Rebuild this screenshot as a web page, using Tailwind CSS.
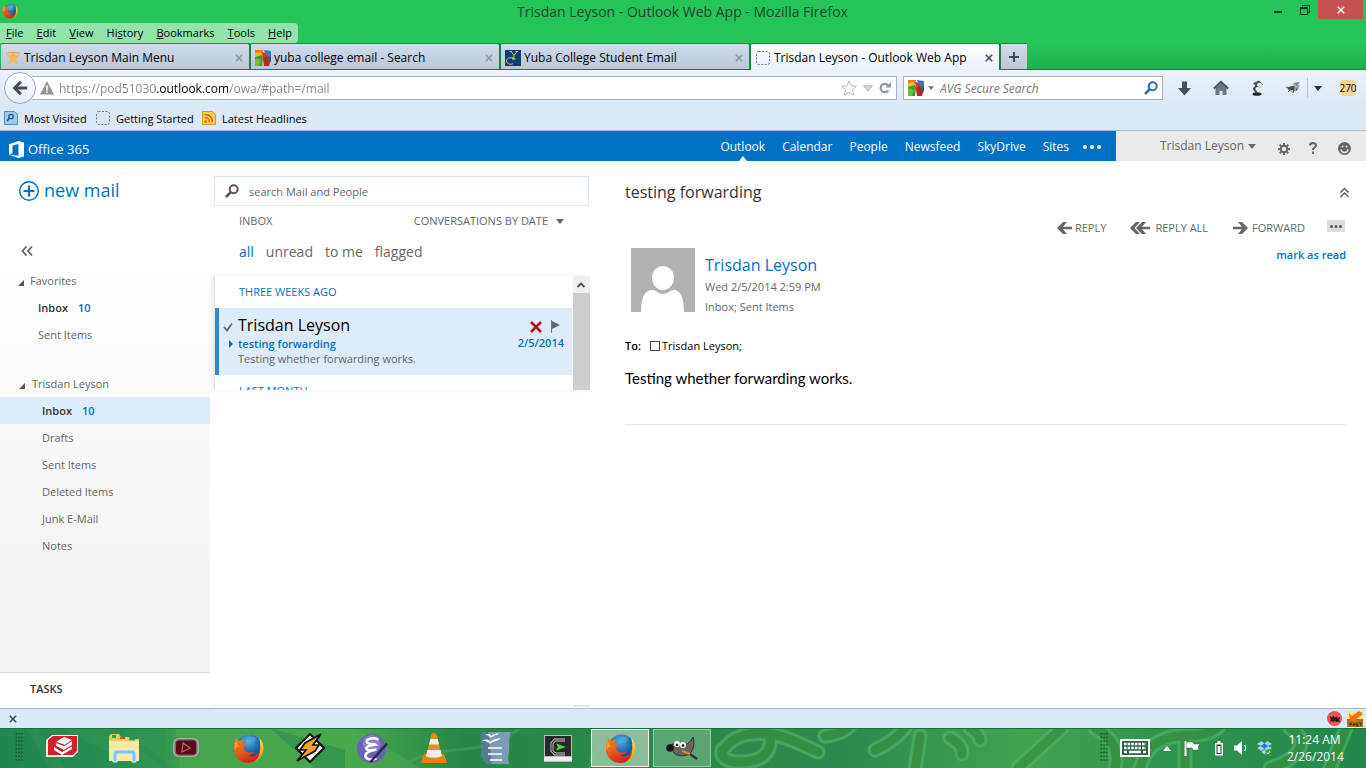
<!DOCTYPE html>
<html lang="en">
<head>
<meta charset="utf-8">
<meta name="viewport" content="width=device-width, initial-scale=1">
<title>Trisdan Leyson - Outlook Web App</title>
<script src="https://cdn.jsdelivr.net/npm/@tailwindcss/browser@4"></script>
</head>
<body class="flex h-screen flex-col overflow-hidden bg-white font-['Open_Sans','Noto_Sans',sans-serif] text-[11px] leading-4 text-black">

<svg class="absolute size-0" aria-hidden="true">
  <defs>
    <radialGradient id="globe" cx=".45" cy=".25" r=".8"><stop offset="0" stop-color="#4fb4e6"/><stop offset=".5" stop-color="#1c6cb4"/><stop offset="1" stop-color="#12306e"/></radialGradient>
    <linearGradient id="fox" x1="0" y1="0" x2=".6" y2="1"><stop offset="0" stop-color="#f08a1e"/><stop offset=".6" stop-color="#e4521b"/><stop offset="1" stop-color="#c3281b"/></linearGradient>
    <linearGradient id="tail" x1="0" y1="0" x2="0" y2="1"><stop offset="0" stop-color="#f9e04c"/><stop offset="1" stop-color="#ee8a1c"/></linearGradient>
  </defs>
  <symbol id="firefox" viewBox="0 0 32 32">
    <circle cx="17" cy="15" r="13.500" fill="url(#globe)"/>
    <path d="M16 5c3-2 7-1 8 1-2 1-1 3-4 4-3 0-5-2-4-5z" fill="#57a3d8" opacity=".7"/>
    <path d="M27 5c4 4 5 9 4 14-2 8-9 12-15 12 6-3 11-7 12-14 .4-4 0-8-1-12z" fill="url(#tail)"/>
    <path d="M3 5l3 3c2-1 4-1 6-1-2 2-2 3-1 4 1 0 3 0 3 1 0 1-2 2-3 3 1 3 3 5 6 5 2 0 3-1 5-1-1 3-4 4-7 4 5 3 11 0 13-6 0 8-5 14-12 14C8 31 1 25 1 17 1 12 2 9 3 5z" fill="url(#fox)"/>
    <path d="M3 6c0 3 1 6 4 8-3 0-5 2-5 4C1 13 2 9 3 6z" fill="#f8a63a" opacity=".8"/>
  </symbol>
  <symbol id="avg" viewBox="0 0 16 16">
    <path d="M0 0h8l-1 4-7 3z" fill="#ee7a1c"/><path d="M0 3l6-1 1 4-7 2z" fill="#f6b826"/><path d="M0 7l7-2 1 3-1 8H0z" fill="#3c9a3c"/><path d="M0 9c3-1 5 0 6 2l-2 5H0z" fill="#6cbb3c"/>
    <path d="M9 0l7 1v7l-5-2z" fill="#2a7fc4"/><path d="M7 2l4 1 2 5-5 1z" fill="#d9301f"/><path d="M8 9l4-3 4 3-2 7H9z" fill="#b8281c"/><path d="M13 6l3 1v5l-2-2z" fill="#1c5ea8"/>
  </symbol>
  <symbol id="dashed" viewBox="0 0 16 16"><rect x="1.500" y="1.500" width="13" height="13" rx="2" fill="none" stroke="#6e7681" stroke-dasharray="2 1.500"/></symbol>
  <symbol id="x" viewBox="0 0 8 8"><path d="M.8.8l6.400 6.400M7.200.8L.8 7.200" stroke="currentColor" stroke-width="1.500"/></symbol>
  <symbol id="lens" viewBox="0 0 14 14"><circle cx="8.700" cy="5.300" r="4" fill="none" stroke="currentColor" stroke-width="2"/><path d="M5.800 8.200L1 13" stroke="currentColor" stroke-width="2.600"/></symbol>
  <symbol id="down" viewBox="0 0 8 5"><path d="M0 0h8L4 5z" fill="currentColor"/></symbol>
  <symbol id="arrowL" viewBox="0 0 16 12"><path d="M7 0h4L7 4.700h9v2.600H7L11 12H7L1 6z" fill="currentColor"/></symbol>
  <symbol id="grip" viewBox="0 0 10 32"><g stroke="#12502f" stroke-width="1.500" stroke-dasharray="1.500 2.500"><path d="M1 0v32M4 0v32M7 0v32"/></g></symbol>
</svg>

<!-- Window title and menus -->
<header class="shrink-0 bg-[#23c558]">
  <div class="flex h-[23px] items-start">
    <svg class="mt-[3px] ml-[2px] size-4"><use href="#firefox"/></svg>
    <h1 class="flex-1 pl-[82px] text-center text-[14px] leading-6 text-[#22432f]">Trisdan Leyson - Outlook Web App - Mozilla Firefox</h1>
    <button aria-label="Minimize" class="flex h-5 w-[26px] items-center justify-center"><svg class="size-3" viewBox="0 0 12 12"><path d="M2 8h8" stroke="#1f2f25" stroke-width="2"/></svg></button>
    <button aria-label="Restore" class="flex h-5 w-[27px] items-center justify-center"><svg class="size-3" viewBox="0 0 12 12" fill="none" stroke="#1f2f25"><path d="M3.500 3V1.500h7v7H9"/><path d="M1.500 4h7v6.500h-7z"/><path d="M1 4h8" stroke-width="2"/></svg></button>
    <button aria-label="Close" class="mr-[3px] flex h-[19px] w-[45px] items-center justify-center bg-[#c75050] text-white"><svg class="size-2"><use href="#x"/></svg></button>
  </div>
  <nav class="flex h-5 w-[298px] items-center justify-between rounded-r bg-[#92e4ab] px-[6px] text-[11px]">
    <button><u>F</u>ile</button><button><u>E</u>dit</button><button><u>V</u>iew</button><button>Hi<u>s</u>tory</button><button><u>B</u>ookmarks</button><button><u>T</u>ools</button><button><u>H</u>elp</button>
  </nav>
  <div class="flex h-[27px] items-end gap-[2px] border-b border-[#1c7b3d] bg-linear-to-b from-[#23c558] to-[#20b04e] pl-px">
    <div class="flex h-[26px] max-w-[248px] flex-1 items-center rounded-t-xs border-t border-[#1c8a43] bg-linear-to-b from-[#cfdcea] to-[#b9c7d7] pt-[2px] pl-1 shadow-[2px_0_0_#1b8340]">
      <svg class="size-4" viewBox="0 0 16 16"><path d="M8 1l2 4h5l-4 4 2 6-5-3-5 3 2-6-4-4h5z" fill="#f3b75a"/><path d="M1 4c3-2 11-2 14 0" stroke="#e9a23c" fill="none"/></svg>
      <span class="ml-[3px] flex-1 truncate text-[12px]">Trisdan Leyson Main Menu</span>
      <button aria-label="Close tab" class="mr-[6px] text-[#8a95a1]"><svg class="size-2"><use href="#x"/></svg></button>
    </div>
    <div class="flex h-[26px] max-w-[248px] flex-1 items-center rounded-t-xs border-t border-[#1c8a43] bg-linear-to-b from-[#cfdcea] to-[#b9c7d7] pt-[2px] pl-1 shadow-[2px_0_0_#1b8340]">
      <svg class="size-4"><use href="#avg"/></svg>
      <span class="ml-[3px] flex-1 truncate text-[12px]">yuba college email - Search</span>
      <button aria-label="Close tab" class="mr-[6px] text-[#8a95a1]"><svg class="size-2"><use href="#x"/></svg></button>
    </div>
    <div class="flex h-[26px] max-w-[248px] flex-1 items-center rounded-t-xs border-t border-[#1c8a43] bg-linear-to-b from-[#cfdcea] to-[#b9c7d7] pt-[2px] pl-1 shadow-[2px_0_0_#1b8340]">
      <svg class="size-4" viewBox="0 0 16 16"><path d="M0 0h16v16H0z" fill="#0c3f78"/><path d="M4.500 1.500h2.500M10.500 1.500h2.500M6 1.500l3 4 3-4M9 5.500V9M7.500 9h3" stroke="#d9c24a" fill="none"/><path d="M8 8.500C5 6.500 1.500 8.500 1.500 11s4 4.500 6.500 2.500M8 7v3" stroke="#d9c24a" fill="none"/></svg>
      <span class="ml-[3px] flex-1 truncate text-[12px]">Yuba College Student Email</span>
      <button aria-label="Close tab" class="mr-[6px] text-[#8a95a1]"><svg class="size-2"><use href="#x"/></svg></button>
    </div>
    <div class="-mb-px flex h-[27px] max-w-[248px] flex-1 items-center rounded-t-xs border-t border-[#1c8a43] bg-linear-to-b from-white to-[#e9f2fb] pt-px pl-1 shadow-[2px_0_0_#1b8340]">
      <svg class="size-4"><use href="#dashed"/></svg>
      <span class="ml-[3px] flex-1 truncate text-[12px]">Trisdan Leyson - Outlook Web App</span>
      <button aria-label="Close tab" class="mr-[6px] text-[#3f4750]"><svg class="size-2"><use href="#x"/></svg></button>
    </div>
    <button aria-label="New tab" class="flex h-[26px] w-[26px] items-center justify-center border-t border-[#1c8a43] bg-linear-to-b from-[#cfdcea] to-[#b9c7d7]"><svg class="size-[10px]" viewBox="0 0 10 10"><path d="M5 0v10M0 5h10" stroke="#3f4852" stroke-width="2"/></svg></button>
  </div>
</header>

<!-- Address bar and bookmarks -->
<div class="flex h-9 shrink-0 items-center bg-linear-to-b from-[#ebf3fb] to-[#dbe8f6] pl-1">
  <button aria-label="Back" class="z-10 flex size-8 items-center justify-center rounded-full border border-[#9aa9ba] bg-linear-to-b from-white to-[#e3edf7]"><svg class="size-4" viewBox="0 0 18 18"><path d="M10 2L3 9l7 7M3.500 9H17" stroke="#414c57" stroke-width="3.400" fill="none"/></svg></button>
  <div class="-ml-1 flex h-6 min-w-0 flex-1 items-center border border-l-0 border-[#a3b3c4] bg-white pl-2">
    <svg class="size-[14px] shrink-0" viewBox="0 0 14 14"><path d="M7 0l7 13.500H0z" fill="#959595"/><path d="M7 4.500v5M7 10.500v1.600" stroke="#fff" stroke-width="1.700"/></svg>
    <input aria-label="Address" class="ml-[5px] min-w-0 flex-1 bg-[linear-gradient(90deg,#858585_96px,#000_96px,#000_169px,#858585_169px)] bg-clip-text pt-px text-[12px] text-transparent outline-none" value="https://pod51030.outlook.com/owa/#path=/mail">
    <button aria-label="Bookmark"><svg class="size-4" viewBox="0 0 16 16"><path d="M8 .8l2.200 4.900 5.200.6-3.900 3.500 1.100 5.300L8 12.400l-4.600 2.700 1.100-5.300L.6 6.300l5.200-.6z" fill="#fff" stroke="#b3b8bd"/></svg></button>
    <button aria-label="History list" class="ml-[6px]"><svg class="h-[7px] w-[10px]" viewBox="0 0 11 7"><path d="M.5.500h10l-5 6z" fill="#d3d8de" stroke="#aab2ba"/></svg></button>
    <button aria-label="Reload" class="mr-[5px] ml-[6px]"><svg class="size-3" viewBox="0 0 12 12"><path d="M9.200 8.500a4.200 4.200 0 1 1 0-5" stroke="#8c99a6" stroke-width="2.200" fill="none"/><path d="M12 0v5.500H6.500z" fill="#8c99a6"/></svg></button>
  </div>
  <div class="ml-[6px] flex h-6 w-[260px] items-center border border-[#a3b3c4] bg-white pl-1">
    <svg class="size-4 shrink-0"><use href="#avg"/></svg>
    <svg class="ml-[4px] h-1 w-[6px] shrink-0 text-[#777]"><use href="#down"/></svg>
    <input aria-label="Search" placeholder="AVG Secure Search" class="ml-[6px] min-w-0 flex-1 pt-px text-[12px] italic outline-none placeholder:text-[#777]">
    <button aria-label="Go" class="mr-1 text-[#2c6db3]"><svg class="size-[14px]"><use href="#lens"/></svg></button>
  </div>
  <button aria-label="Downloads" class="ml-[14px]"><svg class="size-[15px]" viewBox="0 0 15 15"><path d="M5 .5h5V7h4l-6.500 7.500L1 7h4z" fill="#444f5a"/></svg></button>
  <button aria-label="Home" class="ml-[21px]"><svg class="size-4" viewBox="0 0 16 16"><path d="M8 3l5.500 5v7h-4v-4h-3v4h-4V8z" fill="#6b7680"/><path d="M.8 8.500L8 1.800l7.200 6.700" stroke="#44505c" stroke-width="1.800" fill="none"/></svg></button>
  <button aria-label="Lamp" class="ml-5"><svg class="size-4" viewBox="0 0 16 16"><ellipse cx="8" cy="14" rx="4.500" ry="1.800" fill="#222"/><path d="M8 13L5 9l3-4" stroke="#444" stroke-width="2" fill="none"/><path d="M4 3l6-2.500 4 4-3 3-4-1z" fill="#555"/><ellipse cx="10.500" cy="5" rx="2.600" ry="2" fill="#f1f1f1"/></svg></button>
  <button aria-label="Fly" class="ml-5"><svg class="size-4" viewBox="0 0 16 16"><path d="M3 9l6-5 6 1-2 5-7 2z" fill="#a7abad"/><path d="M1 7l4 1M3 12l3-3M8 13l1-4M11 11l1-3" stroke="#555"/><ellipse cx="7" cy="8" rx="2.800" ry="2" fill="#4d4f50"/><path d="M8 3l7-1-3 4z" fill="#7e8284"/><circle cx="4" cy="8.500" r="1.300" fill="#6d3b35"/></svg></button>
  <span class="mx-[6px] h-5 w-px bg-[#b8c4d1]"></span>
  <button aria-label="More add-ons"><svg class="h-[5px] w-2 text-[#26323e]"><use href="#down"/></svg></button>
  <button class="mr-[10px] ml-[18px] flex h-4 w-4 items-center justify-center rounded-sm bg-[#fbd391] text-[10px]">270</button>
</div>
<nav class="flex h-6 shrink-0 items-center bg-[#dbe8f6] pl-1 text-[11px]" aria-label="Bookmarks">
  <svg class="size-[14px]" viewBox="0 0 14 14"><path d="M.5.500h10l3 3v10H.5z" fill="#9ccbe8" stroke="#4d93c0"/><circle cx="7" cy="5.500" r="2.200" fill="none" stroke="#1d567f" stroke-width="1.300"/><path d="M5.500 7L3 10" stroke="#1d567f" stroke-width="1.500"/></svg>
  <a href="#" class="ml-[6px] w-[66px] pt-px whitespace-nowrap">Most Visited</a>
  <svg class="ml-[5px] size-4"><use href="#dashed"/></svg>
  <a href="#" class="ml-[5px] w-[80px] pt-px whitespace-nowrap">Getting Started</a>
  <svg class="ml-[6px] size-[14px]" viewBox="0 0 14 14"><path d="M.5.500h10l3 3v10H.5z" fill="#f9cf55" stroke="#d89c20"/><circle cx="3.500" cy="10.500" r="1.200" fill="#d76c12"/><path d="M2.500 6.500c3 0 5 2 5 5M2.500 3.500c5 0 8 3 8 8" stroke="#d76c12" stroke-width="1.400" fill="none"/></svg>
  <a href="#" class="ml-[6px] pt-px">Latest Headlines</a>
</nav>

<!-- Office 365 bar -->
<div class="flex h-[31px] shrink-0 border-t border-[#a9b9cb] bg-[#0072c6] text-white">
  <a href="#" class="flex flex-1 items-center pt-[6px] pl-[9px]">
    <svg class="h-[17px] w-[15px]" viewBox="0 0 15 17"><path fill-rule="evenodd" d="M0 3.200L9.500 0 15 1.500v14L9.500 17 0 13.700l9.500 1V3L3.500 4.500v7.700L0 13.700z" fill="#fff"/></svg>
    <span class="ml-1 text-[13px]">Office 365</span>
  </a>
  <nav class="flex items-center gap-[17px] text-[12px]">
    <a href="#" class="relative flex h-full items-center pt-[2px]">Outlook<svg class="absolute bottom-0 left-1/2 h-[5px] w-2 -translate-x-1/2 rotate-180"><use href="#down"/></svg></a>
    <a href="#" class="pt-[2px]">Calendar</a><a href="#" class="pt-[2px]">People</a><a href="#" class="pt-[2px]">Newsfeed</a><a href="#" class="pt-[2px]">SkyDrive</a><a href="#" class="pt-[2px]">Sites</a>
    <button aria-label="More apps" class="mr-[15px] -ml-[3px] pt-[2px]"><svg class="h-1 w-[18px]" viewBox="0 0 18 4" fill="#fff"><circle cx="2" cy="2" r="2"/><circle cx="9" cy="2" r="2"/><circle cx="16" cy="2" r="2"/></svg></button>
  </nav>
  <div class="flex w-[250px] items-center justify-end bg-[#e9eaeb] text-[#666]">
    <button class="flex items-center gap-1 text-[12px]">Trisdan Leyson <svg class="h-[5px] w-2"><use href="#down"/></svg></button>
    <button aria-label="Settings" class="mt-[5px] ml-[22px]"><svg class="size-3" viewBox="0 0 12 12"><circle cx="6" cy="6" r="3.200" fill="none" stroke="#666" stroke-width="2"/><path d="M6 0v2M6 10v2M0 6h2M10 6h2M1.800 1.800l1.400 1.400M8.800 8.800l1.400 1.400M10.200 1.800L8.800 3.200M3.200 8.800l-1.400 1.400" stroke="#666" stroke-width="2"/></svg></button>
    <button aria-label="Help" class="mt-[4px] ml-[19px]"><svg class="h-3 w-2" viewBox="0 0 8 12"><path d="M1 3.500C1 .5 7 .300 7 3.300c0 2.200-3 2.200-3 4.700M4 9.500V12" stroke="#666" stroke-width="2.100" fill="none"/></svg></button>
    <button aria-label="Feedback" class="mt-[5px] mr-[15px] ml-[21px]"><svg class="size-[13px]" viewBox="0 0 13 13"><circle cx="6.500" cy="6.500" r="6.500" fill="#666"/><path d="M3 7.500c.5 4 6.500 4 7 0" stroke="#e9eaeb" stroke-width="1.400" fill="none"/><circle cx="4.500" cy="4.500" r="1" fill="#e9eaeb"/><circle cx="8.500" cy="4.500" r="1" fill="#e9eaeb"/></svg></button>
  </div>
</div>

<main class="flex min-h-0 flex-1 text-[#666]">
  <!-- Folder pane -->
  <aside class="flex w-[210px] shrink-0 flex-col">
    <div class="flex h-[60px] items-center pl-[18px]">
      <button class="flex items-center gap-1 text-[18px] leading-6 text-[#0072c6]"><svg class="size-[22px]" viewBox="0 0 22 22"><circle cx="11" cy="11" r="9.300" fill="none" stroke="#0072c6" stroke-width="1.500"/><path d="M11 5.500v11M5.500 11h11" stroke="#0072c6" stroke-width="2.200"/></svg><span class="pb-[2px]">new mail</span></button>
    </div>
    <button aria-label="Collapse folders" class="mt-6 ml-[21px] flex h-3 w-3 items-center"><svg class="h-[10px] w-3" viewBox="0 0 12 10"><path d="M5.500.5L1.500 5l4 4.500M11 .5L7 5l4 4.500" stroke="#666" stroke-width="1.800" fill="none"/></svg></button>
    <nav class="mt-[10px] flex flex-1 flex-col bg-linear-to-b from-white to-[#f3f3f3] to-80%" aria-label="Folders">
      <button class="flex h-[27px] items-center gap-[6px] pl-[18px]"><svg class="mt-1 size-[6px]" viewBox="0 0 6 6"><path d="M6 0v6H0z" fill="#555"/></svg>Favorites</button>
      <a href="#" class="flex h-[27px] items-center gap-[10px] pl-[38px] font-semibold text-[#333]">Inbox <b class="font-semibold text-[#0072c6]">10</b></a>
      <a href="#" class="flex h-[27px] items-center pl-[38px]">Sent Items</a>
      <button class="mt-[22px] flex h-[27px] items-center gap-[7px] pl-[19px]"><svg class="mt-1 size-[6px]" viewBox="0 0 6 6"><path d="M6 0v6H0z" fill="#555"/></svg>Trisdan Leyson</button>
      <a href="#" class="flex h-[27px] items-center gap-[10px] bg-[#deebf8] pl-[42px] font-semibold text-[#333]">Inbox <b class="font-semibold text-[#0072c6]">10</b></a>
      <a href="#" class="flex h-[27px] items-center pl-[42px]">Drafts</a>
      <a href="#" class="flex h-[27px] items-center pl-[42px]">Sent Items</a>
      <a href="#" class="flex h-[27px] items-center pl-[42px]">Deleted Items</a>
      <a href="#" class="flex h-[27px] items-center pl-[42px]">Junk E-Mail</a>
      <a href="#" class="flex h-[27px] items-center pl-[42px]">Notes</a>
    </nav>
    <a href="#" class="flex h-9 items-center border-t border-[#d5d5d5] bg-white pb-[3px] pl-[30px] font-semibold text-[#333]">TASKS</a>
  </aside>

  <!-- Message list -->
  <section class="ml-1 flex w-[376px] shrink-0 flex-col pt-[15px]">
    <label class="mr-px flex h-[30px] items-center border border-[#d5e5f5] pl-[10px]"><svg class="size-[14px] text-[#555]"><use href="#lens"/></svg><input type="search" placeholder="search Mail and People" class="ml-[10px] flex-1 pt-px outline-none placeholder:text-[#666]"></label>
    <div class="flex h-[30px] items-center justify-between pr-[26px] pl-[25px]"><h2>INBOX</h2><button class="flex items-center gap-2">CONVERSATIONS BY DATE <svg class="h-[5px] w-2"><use href="#down"/></svg></button></div>
    <div class="flex h-8 items-center gap-3 pl-[25px] text-[14px] leading-5"><button class="text-[#0072c6]">all</button><button>unread</button><button>to me</button><button>flagged</button></div>
    <div class="mt-2 flex h-[114px] overflow-hidden border-l border-[#e3e3e3] shadow-[-3px_0_4px_#eeeeee]">
      <div class="min-w-0 flex-1">
        <h3 class="flex h-8 items-center pl-6 text-[#0072c6]">THREE WEEKS AGO</h3>
        <article class="mr-px flex h-[67px] border-l-4 border-[#2a8dd4] bg-[#deebf8]">
          <div class="flex w-[19px] flex-col items-end gap-2 pt-[14px] pr-[5px]">
            <svg class="size-[10px]" viewBox="0 0 10 10"><path d="M1 5l3 3.500L9 1.500" stroke="#666" stroke-width="1.800" fill="none"/></svg>
            <svg class="h-2 w-1" viewBox="0 0 4 8"><path d="M0 0l4 4-4 4z" fill="#0072c6"/></svg>
          </div>
          <div class="flex-1 pt-[6px]">
            <p class="text-[16px] leading-[22px] text-black">Trisdan Leyson</p>
            <p class="leading-[15px] font-semibold text-[#0072c6]">testing forwarding</p>
            <p class="leading-[15px]">Testing whether forwarding works.</p>
          </div>
          <div class="flex flex-col items-end pt-3 pr-2">
            <div class="flex items-center gap-[9px] pr-[4px]">
              <button aria-label="Delete"><svg class="size-3" viewBox="0 0 12 12"><path d="M1 1l10 10M11 1L1 11" stroke="#b5121b" stroke-width="2.600"/></svg></button>
              <button aria-label="Flag"><svg class="h-[13px] w-[9px]" viewBox="0 0 9 13"><path d="M.5 0v13" stroke="#777"/><path d="M1 1l8 4-8 4z" fill="#666"/></svg></button>
            </div>
            <time class="mt-[2px] leading-[15px] font-semibold text-[#0072c6]">2/5/2014</time>
          </div>
        </article>
        <h3 class="pt-2 pl-6 text-[#0072c6]">LAST MONTH</h3>
      </div>
      <div class="w-[17px] bg-[#cdcdcd]"><button aria-label="Scroll up" class="flex h-[17px] w-full items-center justify-center bg-[#f0f0f0] pr-[2px]"><svg class="h-[6px] w-2" viewBox="0 0 8 6"><path d="M.5 5L4 1.500 7.500 5" stroke="#505050" stroke-width="1.800" fill="none"/></svg></button></div>
    </div>
    <div class="mt-auto mb-[1px] flex justify-between"><span class="h-px w-[356px] bg-[#ececec]"></span><span class="h-[2px] w-[17px] bg-[#e6e6e6]"></span></div>
  </section>

  <!-- Reading pane -->
  <section class="min-w-0 flex-1 pt-[19px] pr-5 pl-[35px]">
    <div class="flex items-center justify-between"><h2 class="text-[16px] leading-6 text-[#333]">testing forwarding</h2><button aria-label="Collapse header" class="-mr-[3px]"><svg class="h-[11px] w-[9px]" viewBox="0 0 9 11"><path d="M.5 5.500l4-4 4 4M.5 10l4-4 4 4" stroke="#555" stroke-width="1.400" fill="none"/></svg></button></div>
    <div class="mt-[15px] flex h-[18px] items-center justify-end text-[11px]">
      <button class="flex items-center gap-[3px]"><svg class="h-3 w-4"><use href="#arrowL"/></svg>REPLY</button>
      <button class="ml-6 flex items-center gap-[5px]"><svg class="h-3 w-5" viewBox="0 0 20 12" fill="#666"><path d="M6 0h4L4.500 6l5.500 6H6L0 6zM12 0h4l-4 4.700h8v2.600h-8l4 4.700h-4L6 6z"/></svg>REPLY ALL</button>
      <button class="ml-[25px] flex items-center gap-[3px]"><svg class="h-3 w-4 rotate-180"><use href="#arrowL"/></svg>FORWARD</button>
      <button aria-label="More actions" class="mb-1 ml-[22px] mr-px flex h-3 w-[18px] items-center justify-center bg-[#dcdcdc]"><svg class="h-[3px] w-3" viewBox="0 0 12 3" fill="#555"><circle cx="1.500" cy="1.500" r="1.500"/><circle cx="6" cy="1.500" r="1.500"/><circle cx="10.500" cy="1.500" r="1.500"/></svg></button>
    </div>
    <div class="mt-[10px] flex pl-[6px]">
      <svg class="mt-px size-16 shrink-0" viewBox="0 0 64 64"><path d="M0 0h64v64H0z" fill="#b1b1b1"/><ellipse cx="32" cy="30" rx="11" ry="12" fill="#fff"/><path d="M10 64c0-14 3-22 12-22 3 0 5 4 10 4s7-4 10-4c8 0 11 8 11 22z" fill="#fff"/></svg>
      <div class="ml-[10px] flex-1 pt-[7px]">
        <a href="#" class="block text-[16px] leading-[22px] text-[#0072c6]">Trisdan Leyson</a>
        <p class="pt-px leading-5">Wed 2/5/2014 2:59 PM</p>
        <p class="leading-5">Inbox; Sent Items</p>
      </div>
      <button class="h-4 font-semibold text-[#0072c6]">mark as read</button>
    </div>
    <div class="mt-[21px] flex items-center text-black"><span class="w-[25px] font-semibold">To:</span><label class="flex items-center gap-[2px]"><input type="checkbox" class="size-[10px] appearance-none border border-[#444] bg-white">Trisdan Leyson;</label></div>
    <p class="mt-[13px] border-b border-[#e6e6e6] pb-[35px] font-['Lato',sans-serif] text-[15px] leading-[22px] text-black">Testing whether forwarding works.</p>
  </section>
</main>

<!-- Add-on bar -->
<div class="flex h-5 shrink-0 items-center border-t border-[#a9b9cb] bg-[#dbe8f6] pl-[9px]">
  <button aria-label="Close add-on bar" class="text-[#3b4550]"><svg class="size-2"><use href="#x"/></svg></button>
  <svg class="ml-auto size-[15px]" viewBox="0 0 16 16"><circle cx="8" cy="8" r="8" fill="#ea5455"/><path d="M3 5l2.500 2L7 4.500 8 7l3-1.500V8l3-2-1 3.500 1 2.500-2.500-1L10 12l-1.500-1.500L6 12l-.5-1.500L3 12l1-3z" fill="#301818"/></svg>
  <svg class="mr-[3px] ml-[5px] size-4" viewBox="0 0 16 16"><path d="M0 0h16v16H0z" fill="#f6ea8c"/><path d="M0 8h16v8H0z" fill="#a9760f"/><path d="M2 2l3 3 7-5 4 3-7 5 2 3-8-1z" fill="#fb6d0a"/><path d="M3 15v-3h2M3 13.500h2M6 15l1-3 1 3M11 12H9v1.500h2V15H9M12 12h3M13.500 12v3" stroke="#3d2505" stroke-width=".8" fill="none"/></svg>
</div>

<!-- Taskbar -->
<footer class="relative flex h-10 shrink-0 items-center overflow-hidden bg-[#278a4b] text-white">
  <svg class="absolute inset-0 h-full w-full" viewBox="0 0 1366 40" preserveAspectRatio="none" fill="none">
    <defs><linearGradient id="bar"><stop offset="0" stop-color="#1f8650"/><stop offset=".12" stop-color="#2b9350"/><stop offset=".13" stop-color="#3b9d4c"/><stop offset=".26" stop-color="#44a44b"/><stop offset=".34" stop-color="#268749"/><stop offset=".56" stop-color="#2f8a4a"/><stop offset=".62" stop-color="#2a8b4d"/><stop offset=".75" stop-color="#41a450"/><stop offset=".85" stop-color="#2f944c"/><stop offset="1" stop-color="#22884b"/></linearGradient></defs>
    <path d="M0 0h1366v40H0z" fill="url(#bar)"/>
    <path d="M25 0h12l28 40H50zM60 0h45l60 40h-25zM120 0h55v40z" fill="#45a157" opacity=".22"/>
    <path d="M175 0h180l65 40H180z" fill="#4fae4d" opacity=".5"/>
    <path d="M270 0l45 40h30V22z" fill="#1d8750" opacity=".5"/>
    <g stroke-linecap="round" stroke-linejoin="round" opacity=".7">
      <g stroke="#4db067" stroke-width="15">
        <path d="M722 24c10-18 30-20 48-18s38 14 48 18M770 6c3 22-12 28-30 28-12 0-20-4-18-12M825 8c15-2 20-5 27-12"/>
        <path d="M875 22c14-6 22-12 30-22M920 8l-5 34M950 10c8 4 13 10 12 16M970 0c6 4 10 8 10 12M1062 0l-44 40"/>
        <path d="M1095 0c18 10 24 22 20 40M1140 40c4-12 8-24 28-30s30 2 50-10M1185 12v28M1290 0c20 12 12 30-20 40M1330 40l16-40"/>
      </g>
      <g stroke="#37903f" stroke-width="9">
        <path d="M722 24c10-18 30-20 48-18s38 14 48 18M770 6c3 22-12 28-30 28-12 0-20-4-18-12M825 8c15-2 20-5 27-12"/>
        <path d="M875 22c14-6 22-12 30-22M920 8l-5 34M950 10c8 4 13 10 12 16M970 0c6 4 10 8 10 12M1062 0l-44 40"/>
        <path d="M1095 0c18 10 24 22 20 40M1140 40c4-12 8-24 28-30s30 2 50-10M1185 12v28M1290 0c20 12 12 30-20 40M1330 40l16-40"/>
      </g>
    </g>
    <path d="M400 40c40-30 80-6 120-40M590 40c0-20 20-30 50-30" stroke="#44a35a" stroke-width="3" opacity=".6"/>
    <path d="M0 .5h1366" stroke="#1c7040"/>
  </svg>
  <svg class="relative ml-[15px] h-[30px] w-[10px]"><use href="#grip"/></svg>
  <div class="relative ml-[6px] flex items-center">
    <button aria-label="SketchUp Layout" class="flex w-[62px] justify-center"><svg class="mb-1 h-7 w-8" viewBox="0 0 32 28"><path d="M6 3h26v17l-5 5H0V8z" fill="#e9eded"/><path d="M7 4h24v15l-4 4H2V8z" fill="#d3202c"/><path d="M10 10l8-5 8 3-7 5z" fill="#fff"/><path d="M10 11l8 3 8-5v4l-8 5-8-4z" fill="#fff"/><path d="M8 15l8 5 10-6v3l-10 6-8-5z" fill="#fff"/><path d="M10 10.500l8.500 3 7.500-5M10 14.500l8 4 8-5" stroke="#d3202c" fill="none"/></svg></button>
    <button aria-label="File Explorer" class="flex w-[62px] justify-center"><svg class="h-[30px] w-8" viewBox="0 0 32 30"><path d="M1 3l2-2h8l2 3h8l1 2h9v22H1z" fill="#e9c765"/><path d="M4 2h4v3H4z" fill="#20b020"/><path d="M12 4h5v2h-5z" fill="#de4630"/><path d="M21 6h6v2h-6z" fill="#1e8ae0"/><path d="M1 8h30v20H1z" fill="#fbe9a6"/><path d="M1 8h30M1 14h30" stroke="#f6dc88"/><path d="M5 29v-8c0-3 2-4 4-4h15c2 0 4 1 4 4v8h-4v-8H9v8z" fill="#7fc4ea" stroke="#d5effc"/></svg></button>
    <button aria-label="Media player" class="flex w-[62px] justify-center"><svg class="h-6 w-7" viewBox="0 0 28 24"><rect x="1" y="2" width="26" height="19" rx="6" fill="#aab0b0"/><rect x="2.500" y="3" width="23" height="17" rx="5" fill="#6c7575"/><rect x="4" y="4.500" width="20" height="14" rx="3" fill="#5b0912"/><path d="M11 7l7 5-8 4z" fill="none" stroke="#b86a70" stroke-width="1.200"/></svg></button>
    <button aria-label="Firefox" class="flex w-[62px] justify-center"><svg class="size-[31px]"><use href="#firefox"/></svg></button>
    <button aria-label="Winamp" class="flex w-[62px] justify-center"><svg class="size-[30px]" viewBox="0 0 30 30"><path d="M15 1l14 14-14 14L1 15z" fill="#f5f5f5" stroke="#111" stroke-width="2"/><path d="M26 1L10 10l-5 7h6L2 28l18-10 4-6h-6z" fill="#f6a12a" stroke="#111" stroke-width="1.700"/></svg></button>
    <button aria-label="Emacs" class="flex w-[62px] justify-center"><svg class="size-[31px]" viewBox="0 0 32 32"><circle cx="15" cy="16" r="15" fill="#6a62b4"/><circle cx="15" cy="11" r="9" fill="#9992d6" opacity=".6"/><path d="M22 7c-4-3-12-1-12 2s8 2 9 3c-6 0-11 3-9 5s7 0 10 0c-7 1-13 4-11 8 2 3 8 3 11 1" fill="none" stroke="#fff" stroke-width="2.600"/><path d="M31 11L14 30" stroke="#2b2748" stroke-width="2.500"/></svg></button>
    <button aria-label="VLC" class="flex w-[62px] justify-center"><svg class="h-[31px] w-7" viewBox="0 0 28 31"><path d="M4 21h20l3 9H1z" fill="#ee7e12"/><path d="M14 0c2 0 2.500 1 3 3l5 21c-3 3-13 3-16 0l5-21c.5-2 1-3 3-3z" fill="#f08a1c"/><path d="M10.500 6h7l1.500 5.500H9zM7.500 17h13l1.500 6c-4 2-12 2-16 0z" fill="#eee"/></svg></button>
    <button aria-label="Writer" class="flex w-[62px] justify-center"><svg class="size-8" viewBox="0 0 32 32"><path d="M1 0h30c-3 6-1 12-2 20-1 5-1 8 0 12H7L1 24z" fill="#7c9db0"/><path d="M1 0h7l4 32H7L1 24z" fill="#567a90"/><path d="M8 16h14M8 22h14M10 28h12" stroke="#dce8ee" stroke-width="2"/><path d="M2 9c5-3 7-1 8 1 3-3 6-3 11-4-4 4-8 3-11 6-2-3-5-3-8-3zM5 3c4-2 5-1 6 1 3-2 5-2 8-3-2 3-6 2-8 5-1-2-3-3-6-3z" fill="#fff"/></svg></button>
    <button aria-label="Editor" class="flex w-[62px] justify-center"><svg class="h-[27px] w-7" viewBox="0 0 28 27"><path d="M0 0h28v27H0z" fill="#b9bdbd"/><path d="M1 1h26v20H1z" fill="#26282a"/><path d="M21 5H11L8 8v8l3 3h10" fill="none" stroke="#d0d0d0" stroke-width="3"/><path d="M21 5H11L8 8v8l3 3h10" fill="none" stroke="#222" stroke-width="1.200"/><path d="M12 8.500l10 3.500-10 3.500 2-3.500z" fill="#3fe03c"/><path d="M0 22h28v4H0z" fill="#eee"/></svg></button>
    <button aria-label="Firefox, active window" class="ml-[2px] flex h-[38px] w-[58px] items-center justify-center border border-white/90 bg-[#a2cbac]/80"><svg class="size-[31px]"><use href="#firefox"/></svg></button>
    <button aria-label="GIMP" class="ml-1 flex h-[38px] w-[58px] items-center justify-center border border-[#a6d4b0]/80 bg-[#7ab98a]/60"><svg class="h-6 w-8" viewBox="0 0 32 24"><path d="M4 10c4-4 9-2 12-1 6 0 9-4 11-8 2 5 1 14-4 17-5 3-12 2-15-1z" fill="#6a6358" stroke="#332f2a"/><circle cx="4" cy="12" r="3.800" fill="#181818"/><circle cx="11" cy="8" r="3" fill="#fff"/><circle cx="17" cy="9" r="3" fill="#fff"/><circle cx="11" cy="9" r="1.300"/><circle cx="17" cy="9.500" r="1.300"/><path d="M16 15l8 3" stroke="#e0852b" stroke-width="2"/><path d="M24 18l7 5" stroke="#333" stroke-width="2.500"/></svg></button>
  </div>
  <div class="relative ml-auto flex items-center pr-6">
    <svg class="h-[30px] w-[10px]"><use href="#grip"/></svg>
    <button aria-label="Touch keyboard" class="ml-[10px]"><svg class="h-[18px] w-[30px]" viewBox="0 0 30 18"><path d="M0 0h30v18H0z" fill="#fff"/><path d="M2 2h26v14H2z" fill="#28663f"/><path d="M4 5h22M4 9h22" stroke="#fff" stroke-width="2.600" stroke-dasharray="2.600 1"/><path d="M4 13h3M9 13h12M23 13h3" stroke="#fff" stroke-width="2.600"/></svg></button>
    <button aria-label="Show hidden icons" class="ml-[13px]"><svg class="h-[5px] w-2 rotate-180"><use href="#down"/></svg></button>
    <button aria-label="Action center" class="ml-[13px]"><svg class="size-4" viewBox="0 0 16 16"><path d="M1.500 1v15" stroke="#fff" stroke-width="2"/><path d="M2 2h7l1 2h6l-2 3 1 3H9L8 8H2z" fill="#fff" stroke="#245f3a" stroke-width=".5"/></svg></button>
    <button aria-label="Battery" class="ml-[14px]"><svg class="h-[15px] w-[10px]" viewBox="0 0 10 15"><path d="M3.500 0h3v2h2.500v12.500H1V2h2.500z" fill="#fff"/><path d="M2.500 3.500h5V13h-5z" fill="#23482f"/><path d="M3.500 5h3v7h-3z" fill="#fff"/></svg></button>
    <button aria-label="Volume" class="ml-[10px]"><svg class="h-[14px] w-[14px]" viewBox="0 0 14 14"><path d="M0 4.500h3L8 0v14L3 9.500H0z" fill="#fff"/><path d="M10.500 4c1.500 2 1.500 4 0 6" stroke="#fff" stroke-width="1.300" fill="none"/></svg></button>
    <button aria-label="Dropbox" class="ml-[9px]"><svg class="size-[15px]" viewBox="0 0 15 15"><path d="M4.500 0l3 2.500L4 5 0 3zM10.500 0L15 3l-4 2-3.500-2.500zM0 7l4-2 3.500 2.500-3 2.500zM15 7l-4-2-3.500 2.500 3 2.500zM4.500 11l3-2.500 3 2.500-3 2.500z" fill="#9fd3f8"/><path d="M4 5l3.500-2.500L11 5 7.500 7.500z" fill="#2a7fd0"/><circle cx="11.500" cy="11.500" r="3.200" fill="#35a535"/><path d="M10 11.500l1 1.500 2-3" stroke="#fff" fill="none"/></svg></button>
    <time class="ml-[15px] w-[55px] text-center text-[12px] leading-[17px] whitespace-nowrap">11:24 AM<br>2/26/2014</time>
  </div>
</footer>
</body>
</html>
